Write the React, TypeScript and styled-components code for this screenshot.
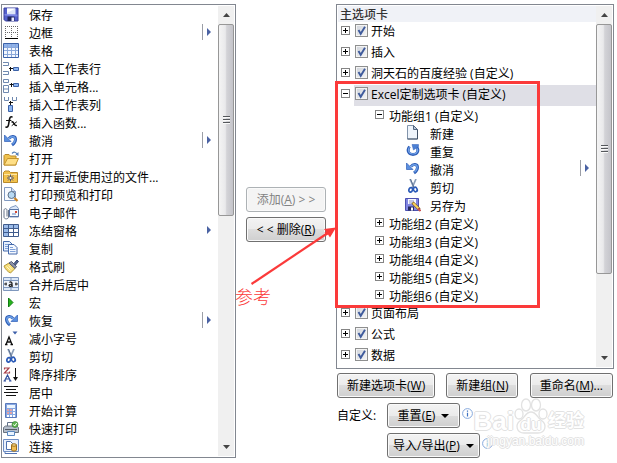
import React, { useState } from "react";
import styled, { createGlobalStyle, css } from "styled-components";

const GlobalStyle = createGlobalStyle`
  *, *::before, *::after { box-sizing: border-box; }
  body { margin: 0; background: #fff; }
  body, button, input { font-family: "Open Sans", "Noto Sans CJK SC", sans-serif; font-size: 12px; line-height: 18px; color: #000; }
  ul { list-style: none; margin: 0; padding: 0; }
  svg { display: block; }
`;

const Page = styled.main`
  display: grid;
  grid-template-columns: minmax(0, 235fr) 80px minmax(0, 278fr);
  gap: 10px;
  align-items: start;
  padding: 4px 3px 4px 1px;
`;

const Panel = styled.section`
  display: flex;
  border: 1px solid #828790;
  padding: 1px;
  background: #fff;
`;

const PanelBody = styled.div`
  flex: 1;
  min-width: 0;
`;

const plainButton = css`
  border: 0;
  padding: 0;
  background: none;
`;

/* ---------- scroll bar ---------- */

const Rail = styled.div`
  display: flex;
  flex-direction: column;
  width: 16px;
  background: #f0f0f0;
`;

const RailButton = styled.button`
  ${plainButton}
  display: grid;
  place-items: center;
  height: 18px;
`;

const Thumb = styled.div<{ $length: number }>`
  display: flex;
  flex-direction: column;
  justify-content: center;
  align-items: center;
  gap: 1px;
  height: ${(p) => p.$length}px;
  border: 1px solid #979797;
  border-radius: 2px;
  background: linear-gradient(90deg, #f4f4f4, #e9e9eb 45%, #d3d3d7 55%, #c4c4ca);
`;

const Grip = styled.i`
  width: 7px;
  height: 2px;
  border-top: 1px solid #55585c;
  background: #fafafa;
`;

const Spacer = styled.div`
  flex: 1;
`;

function ScrollRail({ length }: { length: number }) {
  return (
    <Rail>
      <RailButton type="button" aria-label="向上滚动">
        <svg width="7" height="4" viewBox="0 0 7 4"><path d="M0 4 3.5 0 7 4z" fill="#444" /></svg>
      </RailButton>
      <Thumb $length={length}><Grip /><Grip /><Grip /></Thumb>
      <Spacer />
      <RailButton type="button" aria-label="向下滚动">
        <svg width="7" height="4" viewBox="0 0 7 4"><path d="M0 0 3.5 4 7 0z" fill="#444" /></svg>
      </RailButton>
    </Rail>
  );
}

/* ---------- icons ---------- */

const B = "#3c62a8";

const undoShape = (
  <>
    <path d="M6 5.500C8 2.500 12.600 2.600 12.500 6.500c0 2.400-1.400 4-3.500 5.500" fill="none" stroke="#2f5fb8" strokeWidth="3" />
    <path d="M6 5.500C8 3 12.200 3 12.200 6.500c0 2-1.200 3.500-2.700 4.800" fill="none" stroke="#6ea0e6" strokeWidth="1.400" />
    <path d="M1.500 2v6.500H8z" fill="#5a8fdf" stroke="#2f5fb8" strokeWidth=".7" />
  </>
);

const icons: Record<string, React.ReactNode> = {
  save: (
    <>
      <path d="M1 1h14v13H2.500L1 12.500z" fill="#5560cc" stroke="#3a419c" />
      <path d="M4 1.500h8.500v6H4z" fill="#dfe6f8" />
      <path d="M4 1.500h8.500L4 6z" fill="#fff" />
      <path d="M4.500 9.500h7v4.500h-7z" fill="#20265c" />
      <path d="M8.500 10.500h2.500v3.500H8.500z" fill="#eef" />
      <path d="M1.500 7 14.500 7.500v2L1.500 8.500z" fill="#8e99ee" opacity=".7" />
    </>
  ),
  borders: (
    <>
      <path d="M2 1.500h13M2 7.500h13M2.500 1v12M8.500 1v12M14.500 1v12" stroke="#666" strokeDasharray="1 1" fill="none" />
      <path d="M2 13.500h13" stroke="#000" />
    </>
  ),
  table: (
    <>
      <path d="M.5.500h15v14H.5z" fill="#f4f8ff" stroke={B} />
      <path d="M1 1h14v3H1z" fill="#8fb2ea" />
      <path d="M4.500 1v13M8.500 1v13M12.500 1v13M1 4.500h14M1 7.500h14M1 11.500h14" stroke="#8aa8da" />
    </>
  ),
  insertRow: (
    <>
      <path d="M0 1.500h5.500v3H0M0 10.500h5.500v3H0" fill="#fff" stroke="#6f89b0" />
      <path d="M10.500 6.500h5v3h-5z" fill="#8bb4f0" stroke={B} />
      <path d="M6 7.500h4M7.500 6v4" stroke="#111" />
    </>
  ),
  insertCell: (
    <>
      <path d="M.5.500h5v3h-5zM.5 6.500h5v7h-5zM.5 10h5" fill="#fff" stroke="#6f89b0" />
      <path d="M10.500 4.500h5v3h-5z" fill="#8bb4f0" stroke={B} />
      <path d="M6.500 5.500h4M8.500 4v4" stroke="#111" />
    </>
  ),
  insertColumn: (
    <>
      <path d="M1.500 0v3.500h4V0M9.500 0v3.500h4V0" fill="#fff" stroke="#6f89b0" />
      <path d="M5.500 8.500h4v6h-4z" fill="#8bb4f0" stroke={B} />
      <path d="M7.500 4v4M6 5.500h4" stroke="#111" />
    </>
  ),
  fx: (
    <g fill="none" stroke="#111" strokeLinecap="round">
      <path d="M9 2C7 1 6.500 3.500 6 7s-1 6-3 5" strokeWidth="1.600" />
      <path d="M3.500 5.500h4.500" />
      <path d="M9 7c2-1 1.800 4 4.300 3.500" strokeWidth="1.500" />
      <path d="M13.500 7 9 10.500" />
    </g>
  ),
  undo: undoShape,
  redo: <g transform="translate(16 0) scale(-1 1)">{undoShape}</g>,
  open: (
    <>
      <path d="M1 14V4.500l1-1h4l1.500 1.500H13V14z" fill="#f0c24e" stroke="#b98a2a" />
      <path d="m1 14 3.500-6.500h11L12.500 14z" fill="#ffdf86" stroke="#c3942f" />
      <path d="M9 2.500c2-2 4-1.500 5 .5" fill="none" stroke="#5680b8" strokeWidth="1.200" />
      <path d="M12.500 3.500 15.500 1v4z" fill="#5680b8" />
    </>
  ),
  recent: (
    <>
      <path d="M.5 3.500 2 2h4l1.500 1.500h7v10H.5z" fill="#f3c24c" stroke="#b98a2a" />
      <path d="M1 5.500h13" stroke="#ffe7a5" />
      <path d="M7.500 5.500v7M4 9h7M5 6.500l5 5M10 6.500l-5 5" stroke="#273a79" strokeWidth=".8" />
      <circle cx="7.500" cy="9" r="1" fill="#fff" />
    </>
  ),
  preview: (
    <>
      <path d="M1.500.5h7l4 4V13.500h-11z" fill="#f7faff" stroke="#8199c0" />
      <path d="M8.500.5v4h4" fill="#cddcf2" stroke="#8199c0" />
      <circle cx="8.500" cy="8" r="3.500" fill="#b8d9f3" stroke="#5d7087" />
      <path d="m11.500 11 3 3" stroke="#c98120" strokeWidth="2.300" />
    </>
  ),
  mail: (
    <>
      <path d="M7.500 2.500 13 .5l2.500 3v8.500h-9V4z" fill="#dbe7f8" stroke="#8199c0" />
      <path d="M6.500 4.500h9v7h-9z" fill="#f5f9ff" stroke="#5874a6" />
      <path d="M12 6h2v2h-2z" fill="#d34a33" />
      <path d="M9 9h4" stroke="#6585bd" />
      <path d="M5.500 5v7c0 2.500-4.500 2.500-4.500 0V5.500C1 3 4 3 4 5.500V11.500" fill="none" stroke="#667388" />
    </>
  ),
  freeze: (
    <>
      <path d="M.5 1.500h15v12H.5z" fill="#fff" stroke="#405c8d" />
      <path d="M1 2h14v3H1zM1 5h4v8H1z" fill="#9bbbe9" />
      <path d="M5.500 1.500v12M10.500 1.500v12M.5 5.500h15M.5 9.500h15" stroke="#405c8d" />
    </>
  ),
  copy: (
    <>
      <path d="M.5.500h6l2.500 2.500v7H.5z" fill="#e6effc" stroke="#4469aa" />
      <path d="M2 3.500h4M2 5.500h5M2 7.500h5" stroke="#7fa1d8" />
      <path d="M5.500 3.500h5.500l3 3v6.500H5.500z" fill="#f4f8ff" stroke="#4469aa" />
      <path d="M7 6.500h3M7 8.500h5.500M7 10.500h5.500" stroke="#7fa1d8" />
    </>
  ),
  brush: (
    <>
      <path d="m1 7 5-3 6 5.500-4.500 4.500C5 13 2 10 1 7z" fill="#f5db72" stroke="#b59a3d" />
      <path d="m6 4 2.500-1.500 5 5L12 9.500z" fill="#8d93a8" stroke="#535a70" />
      <path d="m11 4.500 3-3.500 1.500 1.500-3 3.500z" fill="#51638f" stroke="#3c496d" />
      <path d="m3.500 7.500 4 4M5.500 6.500l3.500 4" stroke="#fff6c8" />
    </>
  ),
  merge: (
    <>
      <path d="M.5.500h15v13H.5z" fill="#dce8f8" stroke="#7e97bd" />
      <path d="M8 .5v3M8 10.500v3M.5 3.500h15M.5 10.500h15" stroke="#7e97bd" />
      <path d="M1 4h14v6H1z" fill="#eef4fd" />
      <path d="M1 7h3M12 7h3M3 5.500v3M13 5.500v3" stroke="#222" />
      <path d="M6.500 5.500c1-1 2.500-.5 2.500 1V9l1 .3M9 7C5.500 7 5.500 9.300 7.200 9.300 8.200 9.300 9 8.500 9 8" fill="none" stroke="#111" strokeWidth="1.200" />
    </>
  ),
  macro: <path d="m5.500 3 4.500 4.500L5.500 12z" fill="#26b31b" stroke="#107c12" />,
  shrink: (
    <>
      <path d="M3 13.500 6 6l3 7.500M4 11h4M2 13.500h2.500M7.500 13.500H10" fill="none" stroke="#111" strokeWidth="1.300" />
      <path d="M9.500.5h5L12 3.500z" fill="#3d5fa9" />
    </>
  ),
  cut: (
    <>
      <path d="m5 0 4 9M11 0 7 9" stroke="#8a9db8" strokeWidth="1.700" />
      <path d="m5.500 0 3.500 8.500" stroke="#465b7c" strokeWidth=".7" />
      <ellipse cx="5.700" cy="10.800" rx="1.800" ry="2.300" transform="rotate(25 5.700 10.800)" fill="none" stroke="#2c5bb8" strokeWidth="1.700" />
      <ellipse cx="10.300" cy="10.500" rx="1.800" ry="2.300" transform="rotate(-25 10.300 10.500)" fill="none" stroke="#2c5bb8" strokeWidth="1.700" />
    </>
  ),
  sortDesc: (
    <>
      <path d="M1.500 2.500v-1.500h4.500L1.500 6H6.500V4.500" fill="none" stroke="#a8404a" strokeWidth="1.200" />
      <path d="M1.500 14 4.500 8l3 6M2.500 12h4M.5 14h2.500M6 14h2.500" fill="none" stroke="#304f9d" strokeWidth="1.200" />
      <path d="M12.500 1V12" stroke="#111" />
      <path d="M10 10h5l-2.500 4z" fill="#111" />
    </>
  ),
  center: <path d="M1 1.500h14M3 4.500h10M1 7.500h14M3 10.500h10" stroke="#111" />,
  calc: (
    <>
      <path d="M2.500.5h11v14h-11z" fill="#87a8e2" stroke="#5a7abb" />
      <path d="M4 2h8v3H4z" fill="#edf6ff" />
      <path d="M4 7h8M4 10h8M4 13h8" stroke="#fff" strokeWidth="2" strokeDasharray="2 1" />
      <path d="M4 7h5M4 10h5" stroke="#c8464a" strokeDasharray="2 1" />
    </>
  ),
  print: (
    <>
      <path d="M4.500 6V1.500h6V6" fill="#fff" stroke="#62728a" />
      <path d="M.5 6.500 2.500 5h11l2 1.500v5H.5z" fill="#b4bdca" stroke="#6a7480" />
      <path d="M2 8.500h12" stroke="#545b66" />
      <path d="M4.500 10.500h7v4h-7z" fill="#eaf4ff" stroke="#5b88bf" />
      <circle cx="12" cy="3.500" r="3" fill="#5fb451" stroke="#2e7d2b" strokeWidth=".6" />
      <path d="m10.500 3.500 1.200 1.500 2-3" stroke="#fff" fill="none" />
    </>
  ),
  connect: (
    <>
      <path d="M.5.500h15v12H.5z" fill="#eaf1fc" stroke="#6f8ec4" />
      <path d="M3.500 2.500h4l2 2v6h-6z" fill="#fff" stroke="#4f72b0" />
      <path d="M8.500 6v5c0 1.500 5 1.500 5 0V6z" fill="#efbd55" stroke="#9c6c17" />
      <ellipse cx="11" cy="6" rx="2.500" ry="1.200" fill="#ffe59c" stroke="#9c6c17" />
      <path d="M2 13v1.500h12" fill="none" stroke="#4f72b0" />
    </>
  ),
  fresh: (
    <>
      <path d="M2.500.5h6l4 4v9.500h-10z" fill="#eef4fb" stroke="#8294ab" />
      <path d="M12.500 4.500v9.500h-10" fill="none" stroke="#3f5067" />
      <path d="M8.500.5v4h4z" fill="#b7c8dc" stroke="#52667f" />
    </>
  ),
  repeat: (
    <>
      <path d="M4.500 3.500c-3 4-1 8 3.500 8s6.500-4 3.500-8" fill="none" stroke="#2f5fb8" strokeWidth="2.800" />
      <path d="M4.500 4c-2.500 3-.8 7 3.500 7s6-3.500 3.300-7" fill="none" stroke="#75a5ea" strokeWidth="1.100" />
      <path d="M7 1.500h6.500v2L8.500 7z" fill="#4d81d4" stroke="#2f5fb8" strokeWidth=".5" />
    </>
  ),
  saveAs: (
    <>
      <path d="M.5 1.500h13v12H.5z" fill="#8186e2" stroke="#4c51b0" />
      <path d="M3 2h8v5H3z" fill="#f6f8ff" />
      <path d="M4 4h5M4 6h3" stroke="#8d94c8" />
      <path d="M3 9.500h6v4H3z" fill="#252a5e" />
      <path d="M6 10.500h2v3H6z" fill="#fff" />
      <path d="m7.500 5.500 7 7" stroke="#6d4b12" strokeWidth="3" />
      <path d="m8 6 5.500 5.500" stroke="#fbd15d" strokeWidth="1.900" />
      <path d="m13 11.500 2.500 2.500" stroke="#c95050" strokeWidth="2" />
    </>
  ),
};

function Icon({ name }: { name: string }) {
  return <svg width="16" height="16" viewBox="0 0 16 16" aria-hidden="true">{icons[name]}</svg>;
}

/* ---------- command rows ---------- */

const CommandRow = styled.li<{ $nested?: boolean }>`
  display: flex;
  gap: ${(p) => (p.$nested ? 9 : 10)}px;
  height: 18px;
  padding-left: ${(p) => (p.$nested ? 67 : 0)}px;
  line-height: ${(p) => (p.$nested ? 22 : 20)}px;
  white-space: nowrap;
  > svg { margin-top: 1px; }
`;

const SplitMark = styled.span<{ $line: boolean }>`
  display: flex;
  align-items: center;
  height: 16px;
  margin-left: auto;
  margin-right: 7px;
  padding-left: 4px;
  border-left: 1px solid ${(p) => (p.$line ? "#9b9ea6" : "transparent")};
`;

type Command = { label: string; icon: string; more?: "split" | "menu" };

function CommandItem({ label, icon, more, nested }: Command & { nested?: boolean }) {
  return (
    <CommandRow $nested={nested}>
      <Icon name={icon} />
      <span>{label}</span>
      {more && (
        <SplitMark $line={more === "split"}>
          <svg width="4" height="8" viewBox="0 0 4 8"><path d="m0 0 4 4-4 4z" fill="#4a62a3" /></svg>
        </SplitMark>
      )}
    </CommandRow>
  );
}

const commands: Command[] = [
  { label: "保存", icon: "save" },
  { label: "边框", icon: "borders", more: "split" },
  { label: "表格", icon: "table" },
  { label: "插入工作表行", icon: "insertRow" },
  { label: "插入单元格...", icon: "insertCell" },
  { label: "插入工作表列", icon: "insertColumn" },
  { label: "插入函数...", icon: "fx" },
  { label: "撤消", icon: "undo", more: "split" },
  { label: "打开", icon: "open" },
  { label: "打开最近使用过的文件...", icon: "recent" },
  { label: "打印预览和打印", icon: "preview" },
  { label: "电子邮件", icon: "mail" },
  { label: "冻结窗格", icon: "freeze", more: "menu" },
  { label: "复制", icon: "copy" },
  { label: "格式刷", icon: "brush" },
  { label: "合并后居中", icon: "merge" },
  { label: "宏", icon: "macro" },
  { label: "恢复", icon: "redo", more: "split" },
  { label: "减小字号", icon: "shrink" },
  { label: "剪切", icon: "cut" },
  { label: "降序排序", icon: "sortDesc" },
  { label: "居中", icon: "center" },
  { label: "开始计算", icon: "calc" },
  { label: "快速打印", icon: "print" },
  { label: "连接", icon: "connect" },
];

const groupCommands: Command[] = [
  { label: "新建", icon: "fresh" },
  { label: "重复", icon: "repeat" },
  { label: "撤消", icon: "undo", more: "split" },
  { label: "剪切", icon: "cut" },
  { label: "另存为", icon: "saveAs" },
];

/* ---------- tab tree ---------- */

const TreeHeader = styled.h2`
  height: 16px;
  margin: 0;
  padding-left: 2px;
  font-size: 12px;
  line-height: 18px;
  font-weight: 500;
  color: #333;
  background: #f0f2f7;
`;

const TabRow = styled.div`
  display: flex;
  height: 21px;
  padding-left: 3px;
  line-height: 20px;
  white-space: nowrap;
`;

const TabBody = styled.div<{ $selected?: boolean }>`
  display: flex;
  flex: 1;
  gap: 3px;
  margin-left: 4px;
  padding-left: 1px;
  background: ${(p) => (p.$selected ? "#dfdfe6" : "transparent")};
`;

const ToggleButton = styled.button`
  ${plainButton}
  display: grid;
  place-items: center;
  width: 9px;
  height: 9px;
  margin-top: 4px;
  border: 1px solid #848484;
  background: #fff;
`;

const CheckCell = styled.span`
  display: grid;
  width: 13px;
  height: 13px;
  margin-top: 2px;
  > * { grid-area: 1 / 1; }
  > svg { pointer-events: none; }
`;

const CheckInput = styled.input`
  appearance: none;
  width: 13px;
  height: 13px;
  margin: 0;
  border: 1px solid #8e8f8f;
  background: linear-gradient(135deg, #cfd3da, #f6f6f6);
  box-shadow: inset 0 0 0 1px #f4f4f4;
`;

const Branch = styled.li`
  position: relative;
`;

const Highlight = styled.div`
  position: absolute;
  z-index: 1;
  top: -4px;
  bottom: -4px;
  left: -3px;
  width: 205px;
  border: 3px solid #fb3a3a;
  pointer-events: none;
`;

const GroupRow = styled.div`
  display: flex;
  gap: 5px;
  height: 18px;
  padding-left: 37px;
  line-height: 22px;
  white-space: nowrap;
`;

function Toggle({ open, name }: { open?: boolean; name: string }) {
  return (
    <ToggleButton type="button" aria-expanded={!!open} aria-label={name}>
      <svg width="5" height="5" viewBox="0 0 5 5">
        <path d={open ? "M0 2.500h5" : "M0 2.500h5M2.500 0v5"} stroke="#000" />
      </svg>
    </ToggleButton>
  );
}

function Tab({ id, name, selected }: { id: string; name: string; selected?: boolean }) {
  const [checked, setChecked] = useState(true);
  return (
    <TabRow>
      <Toggle open={selected} name={name} />
      <TabBody $selected={selected}>
        <CheckCell>
          <CheckInput type="checkbox" id={id} checked={checked} onChange={() => setChecked(!checked)} />
          {checked && (
            <svg width="13" height="13" viewBox="0 0 13 13">
              <path d="m3.500 6 2.200 3.800L10 2.800" fill="none" stroke="#3f5b9c" strokeWidth="1.900" />
            </svg>
          )}
        </CheckCell>
        <label htmlFor={id}>{name}</label>
      </TabBody>
    </TabRow>
  );
}

/* ---------- buttons ---------- */

const PushButton = styled.button`
  display: flex;
  align-items: center;
  justify-content: center;
  gap: 6px;
  height: 25px;
  padding: 0 9px;
  border: 1px solid #707070;
  border-radius: 3px;
  background: linear-gradient(#f3f3f3, #ebebeb 50%, #dddddd 50%, #cfcfcf);
  box-shadow: inset 0 0 0 1px #fafafa;
  white-space: nowrap;
  &:disabled {
    border-color: #adb2b5;
    background: #f4f4f4;
    color: #838383;
  }
`;

const DropButton = styled(PushButton)`
  min-width: 73px;
  padding: 0 5px;
`;

const Transfer = styled.div`
  position: relative;
  display: grid;
  gap: 5px;
  padding-top: 183px;
`;

const TransferButton = styled(PushButton)`
  padding: 0;
`;

const Arrow = styled.svg`
  position: absolute;
  z-index: 2;
  top: 220px;
  left: 4px;
  pointer-events: none;
`;

const Note = styled.span`
  position: absolute;
  top: 279px;
  left: -11px;
  font-family: "Noto Sans CJK SC", sans-serif;
  font-size: 18px;
  line-height: 26px;
  font-weight: 300;
  color: #fb3a3a;
  white-space: nowrap;
`;

const RightSide = styled.div`
  display: grid;
  gap: 4px;
`;

const Footer = styled.div`
  position: relative;
  display: grid;
  gap: 5px;
  padding: 0 1px;
`;

const ButtonBar = styled.div`
  display: flex;
  justify-content: space-between;
`;

const Customize = styled.div`
  display: grid;
  grid-template-columns: 50px 1fr;
  row-gap: 5px;
  line-height: 25px;
`;

const MenuLine = styled.div`
  display: flex;
  gap: 2px;
  grid-column: 2;
`;

const InfoButton = styled.button`
  ${plainButton}
  width: 11px;
  height: 11px;
  margin-top: 5px;
`;

function MenuButton({ label, letter }: { label: string; letter: string }) {
  return (
    <MenuLine>
      <DropButton type="button" aria-haspopup="menu">
        <span>{label}(<u>{letter}</u>)</span>
        <svg width="8" height="4" viewBox="0 0 8 4"><path d="M0 0h8L4 4z" /></svg>
      </DropButton>
      <InfoButton type="button" aria-label="信息">
        <svg width="11" height="11" viewBox="0 0 11 11">
          <circle cx="5.500" cy="5.500" r="4.900" fill="#fff" stroke="#86a9dc" />
          <path d="M5.500 2.500v1.200M5.500 4.800v3.700" stroke="#3f73c4" strokeWidth="1.200" />
        </svg>
      </InfoButton>
    </MenuLine>
  );
}

/* ---------- watermark ---------- */

const Watermark = styled.div`
  position: absolute;
  right: 30px;
  bottom: 10px;
  display: grid;
  justify-items: end;
  color: #fff;
  font-family: "Liberation Sans", "Noto Sans CJK SC", sans-serif;
  font-weight: 700;
  text-shadow: 1px 0 #e2e2e2, -1px 0 #e2e2e2, 0 1px #e2e2e2, 0 -1px #e2e2e2;
  pointer-events: none;
`;

const Brand = styled.div`
  display: flex;
  align-items: flex-end;
  font-size: 26px;
  line-height: 26px;
`;

const Paw = styled.span`
  display: grid;
  > * { grid-area: 1 / 1; }
`;

const PawText = styled.span`
  align-self: end;
  justify-self: center;
  font-size: 17px;
  line-height: 18px;
`;

const BrandChinese = styled.span`
  font-size: 18px;
`;

const Site = styled.div`
  font-size: 12px;
  line-height: 14px;
  font-weight: 400;
`;

export default function App() {
  return (
    <>
      <GlobalStyle />
      <Page>
        <Panel aria-label="命令">
          <PanelBody as="ul">
            {commands.map((c) => <CommandItem key={c.label} {...c} />)}
          </PanelBody>
          <ScrollRail length={192} />
        </Panel>

        <Transfer>
          <TransferButton type="button" disabled><span>添加(<u>A</u>) &gt; &gt;</span></TransferButton>
          <TransferButton type="button"><span>&lt; &lt; 删除(<u>R</u>)</span></TransferButton>
          <Arrow width="88" height="62" viewBox="0 0 88 62">
            <path d="M1.500 60 77 9.500" stroke="#fb3a3a" strokeWidth="2.200" />
            <path d="m86 3.500-6 10-2-3-1.500 1-2-3 1.500-1-2-2.500z" fill="#fb3a3a" />
          </Arrow>
          <Note>参考</Note>
        </Transfer>

        <RightSide>
          <Panel aria-label="主选项卡">
            <PanelBody>
              <TreeHeader>主选项卡</TreeHeader>
              <ul>
                <li><Tab id="home" name="开始" /></li>
                <li><Tab id="insert" name="插入" /></li>
                <li><Tab id="baidu" name="洞天石的百度经验 (自定义)" /></li>
                <Branch>
                  <Tab id="excel" name="Excel定制选项卡 (自定义)" selected />
                  <ul>
                    {[1, 2, 3, 4, 5, 6].map((n) => (
                      <li key={n}>
                        <GroupRow>
                          <Toggle open={n === 1} name={`功能组${n}`} />
                          <span>功能组{n} (自定义)</span>
                        </GroupRow>
                        {n === 1 && (
                          <ul>
                            {groupCommands.map((c) => <CommandItem key={c.label} {...c} nested />)}
                          </ul>
                        )}
                      </li>
                    ))}
                  </ul>
                  <Highlight />
                </Branch>
                <li><Tab id="layout" name="页面布局" /></li>
                <li><Tab id="formula" name="公式" /></li>
                <li><Tab id="data" name="数据" /></li>
              </ul>
            </PanelBody>
            <ScrollRail length={250} />
          </Panel>

          <Footer>
            <ButtonBar>
              <PushButton type="button"><span>新建选项卡(<u>W</u>)</span></PushButton>
              <PushButton type="button"><span>新建组(<u>N</u>)</span></PushButton>
              <PushButton type="button"><span>重命名(<u>M</u>)...</span></PushButton>
            </ButtonBar>
            <Customize>
              <span>自定义:</span>
              <MenuButton label="重置" letter="E" />
              <MenuButton label="导入/导出" letter="P" />
            </Customize>
            <Watermark>
              <Brand>
                <span>Bai</span>
                <Paw>
                  <svg width="34" height="36" viewBox="0 0 34 36" fill="#fff" stroke="#e2e2e2" strokeWidth="1.300">
                    <ellipse cx="5" cy="16" rx="4" ry="5" />
                    <ellipse cx="12" cy="7" rx="4.500" ry="6" />
                    <ellipse cx="22" cy="7" rx="4.500" ry="6" />
                    <ellipse cx="29" cy="16" rx="4" ry="5" />
                    <path d="M17 14c5 0 6 5 10 8 7 5 4 13-3 13H10c-7 0-10-8-3-13 4-3 5-8 10-8z" />
                  </svg>
                  <PawText>du</PawText>
                </Paw>
                <BrandChinese>经验</BrandChinese>
              </Brand>
              <Site>jingyan.baidu.com</Site>
            </Watermark>
          </Footer>
        </RightSide>
      </Page>
    </>
  );
}
